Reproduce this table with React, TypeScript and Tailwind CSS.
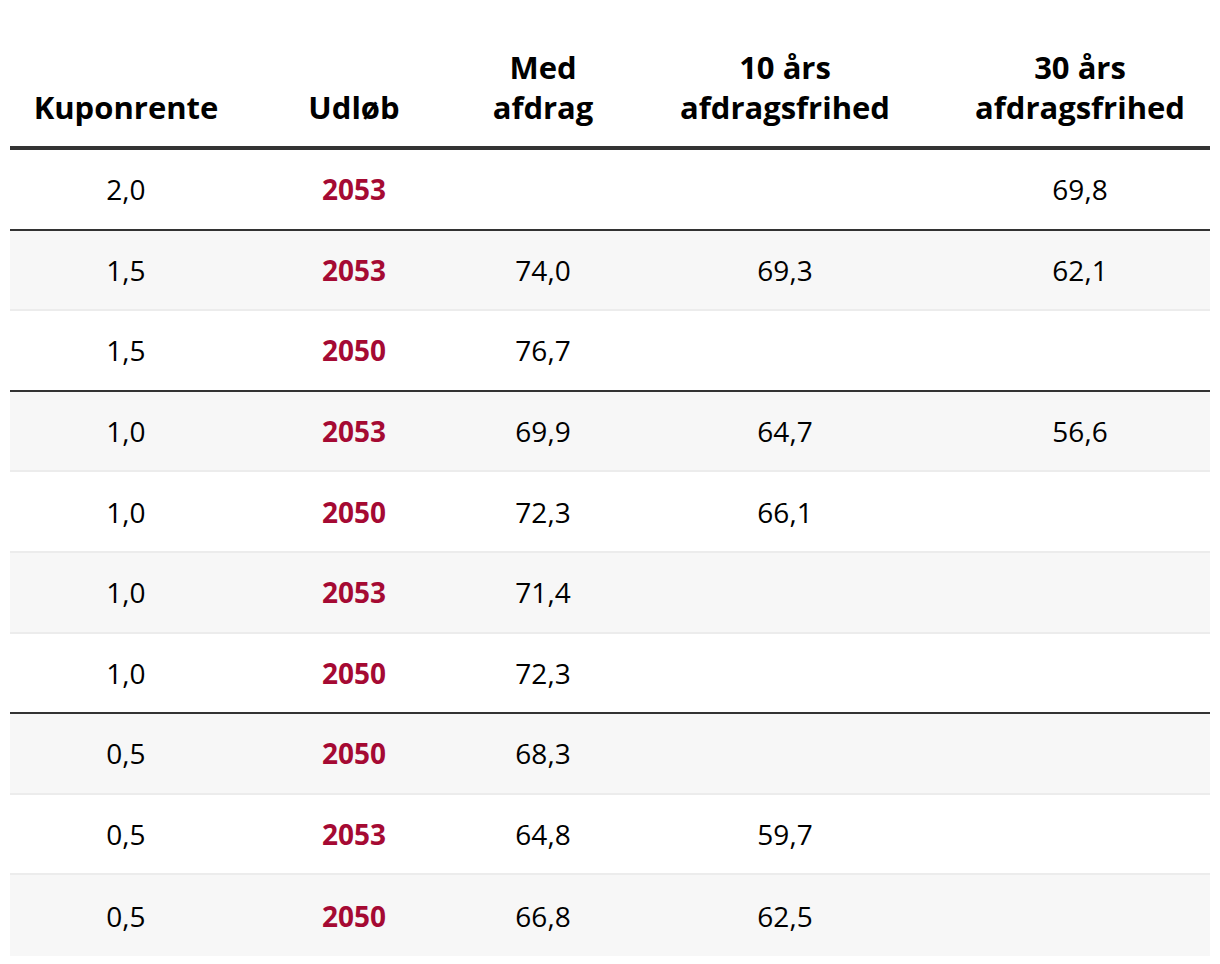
const COLS = ['w-[232px]', 'w-[224px]', 'w-[154px]', 'w-[330px]', 'w-[260px]']

type Row = { kupon: string; udlob: string; med: string; ti: string; tredive: string; groupEnd?: boolean }

const ROWS: Row[] = [
  { kupon: '2,0', udlob: '2053', med: '', ti: '', tredive: '69,8', groupEnd: true },
  { kupon: '1,5', udlob: '2053', med: '74,0', ti: '69,3', tredive: '62,1' },
  { kupon: '1,5', udlob: '2050', med: '76,7', ti: '', tredive: '', groupEnd: true },
  { kupon: '1,0', udlob: '2053', med: '69,9', ti: '64,7', tredive: '56,6' },
  { kupon: '1,0', udlob: '2050', med: '72,3', ti: '66,1', tredive: '' },
  { kupon: '1,0', udlob: '2053', med: '71,4', ti: '', tredive: '' },
  { kupon: '1,0', udlob: '2050', med: '72,3', ti: '', tredive: '', groupEnd: true },
  { kupon: '0,5', udlob: '2050', med: '68,3', ti: '', tredive: '' },
  { kupon: '0,5', udlob: '2053', med: '64,8', ti: '59,7', tredive: '' },
  { kupon: '0,5', udlob: '2050', med: '66,8', ti: '62,5', tredive: '' },
]

const HEADERS = [['Kuponrente'], ['Udløb'], ['Med', 'afdrag'], ['10 års', 'afdragsfrihed'], ['30 års', 'afdragsfrihed']]

export default function App() {
  return (
    <div className="min-h-[964px] bg-white px-[10px] font-['Open_Sans','Noto_Sans',sans-serif] text-[28px]">
      {/* header */}
      <div className="flex h-[150px] items-end border-b-4 border-[#333333] pb-[19px]">
        {HEADERS.map((h, i) => (
          <div key={i} className={`${COLS[i]} text-center text-[31px] font-bold leading-[40px] text-black`}>
            {h.map((l) => (
              <div key={l}>{l}</div>
            ))}
          </div>
        ))}
      </div>

      {ROWS.map((r, i) => {
        const last = i === ROWS.length - 1
        const border = last ? '' : r.groupEnd ? 'border-b-2 border-[#333333]' : 'border-b-2 border-[#ececec]'
        return (
          <div key={i} className={`flex h-[80.6px] items-center ${i % 2 === 1 ? 'bg-[#f7f7f7]' : 'bg-white'} ${border}`}>
            <div className={`${COLS[0]} text-center text-black`}>{r.kupon}</div>
            <div className={`${COLS[1]} text-center font-bold text-[#a50a33]`}>{r.udlob}</div>
            <div className={`${COLS[2]} text-center text-black`}>{r.med}</div>
            <div className={`${COLS[3]} text-center text-black`}>{r.ti}</div>
            <div className={`${COLS[4]} text-center text-black`}>{r.tredive}</div>
          </div>
        )
      })}
    </div>
  )
}
